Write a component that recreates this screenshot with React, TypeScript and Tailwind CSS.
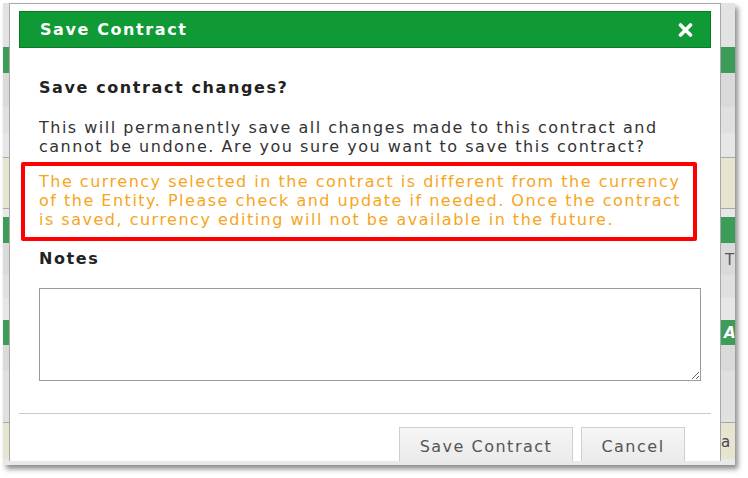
import React from "react";

const stripRows: { h: number; cls: string }[] = [
  { h: 44, cls: "bg-[#e3e3e3]" },
  { h: 26, cls: "bg-[#3c9c58]" },
  { h: 34, cls: "bg-[#dadada]" },
  { h: 26, cls: "bg-[#e0e0e0]" },
  { h: 25, cls: "bg-[#e6e6e6] border-b border-[#a9a9a9]" },
  { h: 51, cls: "bg-[#e7e5cf] border-b border-[#a9a9a9]" },
  { h: 8, cls: "bg-[#e8e8e8]" },
  { h: 26, cls: "bg-[#3c9c58]" },
  { h: 32, cls: "bg-[#dadada]" },
  { h: 23, cls: "bg-[#e0e0e0]" },
  { h: 22, cls: "bg-[#e6e6e6]" },
  { h: 25, cls: "bg-[#3c9c58]" },
  { h: 26, cls: "bg-[#dadada]" },
  { h: 52, cls: "bg-[#e0e0e0] border-b border-[#a9a9a9]" },
  { h: 36, cls: "bg-[#e7e5cf]" },
];

function Strip({ side }: { side: "left" | "right" }) {
  return (
    <div className="flex flex-col overflow-hidden">
      {stripRows.map((r, i) => (
        <div key={i} className={`${r.cls} shrink-0 overflow-hidden`} style={{ height: r.h }}>
          {side === "right" && i === 8 && (
            <span className="block pl-[4px] pt-[6px] text-[15px] text-[#555]">T</span>
          )}
          {side === "right" && i === 11 && (
            <span className="block pl-[3px] pt-[2px] text-[15px] font-bold italic text-white">A</span>
          )}
          {side === "right" && i === 14 && (
            <span className="block pt-[8px] text-[15px] text-[#445]">a</span>
          )}
        </div>
      ))}
    </div>
  );
}

function CloseIcon() {
  return (
    <svg width="15" height="14" viewBox="0 0 15 14" className="block">
      <path d="M2.5 2 L12.5 12 M12.5 2 L2.5 12" stroke="#fff" strokeWidth="3.6" strokeLinecap="round" />
    </svg>
  );
}

export default function App() {
  return (
    <div className="w-[748px] h-[478px] bg-white pt-[3px] pl-[3px] font-['DejaVu_Sans',Verdana,sans-serif]">
      <div className="flex w-[732px] h-[462px] bg-[#e9e9e9] pb-[4px] shadow-[3px_4px_5px_rgba(0,0,0,0.45)] overflow-hidden">
        <div className="w-[6px] shrink-0">
          <Strip side="left" />
        </div>

        <div className="w-[712px] shrink-0 bg-white border border-b-0 border-[#a9a9a9] overflow-hidden">
          <div className="px-[9px] pt-[7px]">
            <div className="flex items-center justify-between h-[37px] bg-[#109a36] border border-[#0b7a28] pl-[20px] pr-[17px]">
              <span className="text-[16px] font-bold tracking-[1.6px] text-white">Save Contract</span>
              <CloseIcon />
            </div>
          </div>

          <div className="pl-[29px] pr-[19px]">
            <div className="mt-[30px] text-[16px] leading-[19px] font-bold tracking-[1.6px] text-[#222]">
              Save contract changes?
            </div>
            <p className="mt-[21px] text-[16px] leading-[19px] tracking-[1.5px] text-[#333] whitespace-nowrap">
              This will permanently save all changes made to this contract and
              <br />
              cannot be undone. Are you sure you want to save this contract?
            </p>
            <div className="mt-[6px] -ml-[18px] mr-[4px] border-4 border-[#ff0000] rounded-[2px] pl-[14px] pt-[6px] pb-[8px] text-[16px] leading-[19px] tracking-[1.5px] text-[#f7a51c] whitespace-nowrap">
              The currency selected in the contract is different from the currency
              <br />
              of the Entity. Please check and update if needed. Once the contract
              <br />
              is saved, currency editing will not be available in the future.
            </div>
            <div className="mt-[8px] text-[16px] leading-[19px] font-bold tracking-[1.6px] text-[#222]">Notes</div>
            <textarea className="block mt-[20px] w-[662px] h-[93px] border border-[#9a9a9a] bg-white outline-none resize" />
          </div>

          <div className="mx-[9px] mt-[32px] border-t border-[#c8c8c8]" />

          <div className="flex justify-end gap-[8px] pr-[35px] pt-[13px]">
            <button className="w-[174px] h-[40px] border border-[#cfcfcf] bg-gradient-to-b from-[#f6f6f6] to-[#e9e9e9] pb-[1px] text-[16px] tracking-[1.5px] text-[#555]">
              Save Contract
            </button>
            <button className="w-[104px] h-[40px] border border-[#cfcfcf] bg-gradient-to-b from-[#f6f6f6] to-[#e9e9e9] pb-[1px] text-[16px] tracking-[1.5px] text-[#555]">
              Cancel
            </button>
          </div>
        </div>

        <div className="w-[14px] shrink-0">
          <Strip side="right" />
        </div>
      </div>
    </div>
  );
}
